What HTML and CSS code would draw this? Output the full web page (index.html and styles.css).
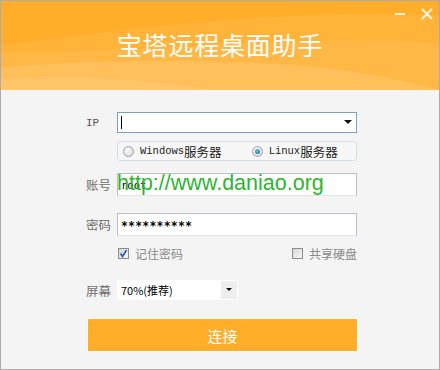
FILE: index.html
```html
<!DOCTYPE html>
<html lang="zh">
<head>
<meta charset="utf-8">
<link rel="stylesheet" href="styles.css">
</head>
<body>
<div class="window">
  <header class="header">
    <svg class="waves" width="438" height="89" viewBox="0 0 438 89" preserveAspectRatio="none">
      <rect width="438" height="89" fill="#ffae29"/>
      <path d="M0 44 C120 30 260 8 438 14 L438 89 L0 89 Z" fill="#ffffff" fill-opacity="0.07"/>
      <path d="M0 52 C110 50 200 44 300 40 C360 38 410 40 438 42 L438 89 L0 89 Z" fill="#ffffff" fill-opacity="0.07"/>
      <path d="M0 66 C80 60 160 58 260 62 C340 66 400 78 438 89 L0 89 Z" fill="#ffffff" fill-opacity="0.12"/>
      <path d="M0 78 C60 74 140 76 210 89 L0 89 Z" fill="#ffffff" fill-opacity="0.08"/>
    </svg>
    <div class="controls">
      <span class="min"></span>
      <svg class="close" width="12" height="12" viewBox="0 0 12 12"><path d="M1 1 L11 11 M11 1 L1 11" stroke="#fff5e0" stroke-width="2"/></svg>
    </div>
    <h1 class="title">宝塔远程桌面助手</h1>
  </header>
  <main class="form">
    <div class="row row-ip">
      <span class="label lat">IP</span>
      <div class="field combo">
        <span class="caret"></span>
        <span class="arrow"></span>
      </div>
    </div>
    <div class="row row-radio">
      <span class="label"></span>
      <div class="field radios">
        <span class="radio-item"><span class="radio"></span><span class="lat">Windows</span>服务器</span>
        <span class="radio-item second"><span class="radio checked"></span><span class="lat">Linux</span>服务器</span>
      </div>
    </div>
    <div class="row row-acc">
      <span class="label">账号</span>
      <div class="field text"><span class="mono">root</span></div>
      <span class="watermark">http://www.daniao.org</span>
    </div>
    <div class="row row-pwd">
      <span class="label">密码</span>
      <div class="field text"><span class="mono stars">**********</span></div>
    </div>
    <div class="row row-check">
      <span class="label"></span>
      <div class="field checks">
        <span class="check-item"><span class="box checked"><svg width="9" height="9" viewBox="0 0 9 9"><path d="M1.5 4.5 L3.5 7.5 L7.5 1" stroke="#2b56b8" stroke-width="1.6" fill="none"/></svg></span>记住密码</span>
        <span class="check-item"><span class="box"></span>共享硬盘</span>
      </div>
    </div>
    <div class="row row-screen">
      <span class="label">屏幕</span>
      <div class="select">
        <span class="select-val">70%(推荐)</span>
        <span class="select-btn"><span class="arrow small"></span></span>
      </div>
    </div>
    <button class="connect">连接</button>
  </main>
</div>
</body>
</html>
```
FILE: styles.css
```css
* { box-sizing: border-box; }
html, body { margin: 0; padding: 0; }
body { width: 440px; height: 370px; overflow: hidden; font-family: "Noto Sans CJK SC", "Noto Sans", sans-serif; }
.window {
  width: 440px; height: 370px;
  border: 1px solid #acacac;
  background: #f4f4f4;
  display: flex; flex-direction: column;
}
.header {
  position: relative;
  height: 89px;
  flex: none;
  display: flex; align-items: center; justify-content: center;
}
.waves { position: absolute; left: 0; top: 0; }
.controls {
  position: absolute; right: 6px; top: 7px;
  display: flex; align-items: center; gap: 16px;
}
.min { width: 10px; height: 2px; background: #fff5e0; margin-top: 0; }
.close { display: block; }
.title {
  position: relative;
  margin: 0; margin-top: -4px;
  font-size: 25px; font-weight: 400; color: #fff;
  letter-spacing: 0.8px;
  line-height: 30px;
}
.form {
  padding-left: 85px;
  display: flex; flex-direction: column;
}
.row { display: flex; align-items: center; position: relative; }
.label { width: 31px; flex: none; font-size: 12.5px; color: #6f6f6f; }
.label.lat { font-family: "Liberation Mono", monospace; font-size: 11px; color: #555; }
.field { width: 240px; background: #fff; position: relative; }
.row-ip { margin-top: 22px; height: 21px; }
.combo { height: 21px; border: 1px solid #7a9fc8; display: flex; align-items: center; }
.caret { width: 1px; height: 13px; background: #000; margin-left: 3px; }
.arrow {
  position: absolute; right: 4px; top: 7px;
  width: 0; height: 0;
  border-left: 4px solid transparent; border-right: 4px solid transparent;
  border-top: 4px solid #111;
}
.row-radio { margin-top: 8px; height: 20px; }
.radios {
  height: 20px; border: 1px solid #d6dee8; border-radius: 3px;
  background: #f7f7f7;
  display: flex; align-items: center; padding-left: 5px;
  font-size: 12.5px; color: #222;
}
.radio-item { display: flex; align-items: center; }
.radio-item.second { margin-left: 30px; }
.lat { font-family: "Liberation Mono", monospace; font-size: 10.5px; }
.radio {
  width: 11px; height: 11px; border-radius: 50%;
  border: 1px solid #a0a0a0;
  background: radial-gradient(circle at 40% 35%, #fafafa, #d4d4d4);
  margin-right: 6px; position: relative;
}
.radio.checked::after {
  content: ""; position: absolute; left: 2px; top: 2px;
  width: 5px; height: 5px; border-radius: 50%;
  background: radial-gradient(circle at 40% 35%, #6fc0ee, #1a5d9a);
}
.row-acc { margin-top: 12px; height: 23px; }
.row-pwd { margin-top: 17px; height: 23px; }
.text {
  height: 23px; border: 1px solid #b9bfc8; border-bottom-color: #dfe4ea;
  display: flex; align-items: center; padding-left: 3px;
}
.mono { font-family: "DejaVu Sans Mono", monospace; font-size: 10.5px; color: #000; }
.stars { font-size: 11.5px; font-weight: bold; letter-spacing: 0.2px; margin-top: 3px; }
.watermark {
  position: absolute; left: 31px; top: -4px;
  font-family: "Liberation Sans", Arial, sans-serif;
  font-size: 21.5px; color: #2eb52e; white-space: nowrap;
  line-height: 28px;
}
.row-check { margin-top: 11px; height: 12px; }
.checks {
  background: transparent;
  display: flex; justify-content: space-between; align-items: center;
  font-size: 12px; color: #8a8a8a;
}
.check-item { display: flex; align-items: center; }
.box {
  width: 11px; height: 11px; border: 1px solid #8c8c8c;
  background: linear-gradient(135deg, #d8d8d8, #f6f6f6);
  margin-left: 1px; margin-right: 6px;
  display: flex; align-items: center; justify-content: center;
}
.box svg { display: block; }
.row-screen { margin-top: 21px; height: 20px; }
.select {
  width: 121px; height: 20px; background: #fff;
  display: flex; align-items: center; position: relative;
}
.select-val { font-family: "Noto Sans CJK SC", sans-serif; font-size: 11px; color: #000; padding-left: 4px; flex: 1; }
.select-btn { width: 16px; height: 18px; background: #eeeeee; margin-right: 1px; position: relative; }
.arrow.small { right: 5px; top: 7px; border-left-width: 3px; border-right-width: 3px; border-top-width: 3px; }
.connect {
  margin-top: 18px; margin-left: 1px;
  width: 271px; height: 34px;
  background: #ffae29; border: 1px solid #fff;
  color: #fff; font-family: "Noto Sans CJK SC", sans-serif; font-size: 15px;
  padding: 0; cursor: pointer;
}
```
